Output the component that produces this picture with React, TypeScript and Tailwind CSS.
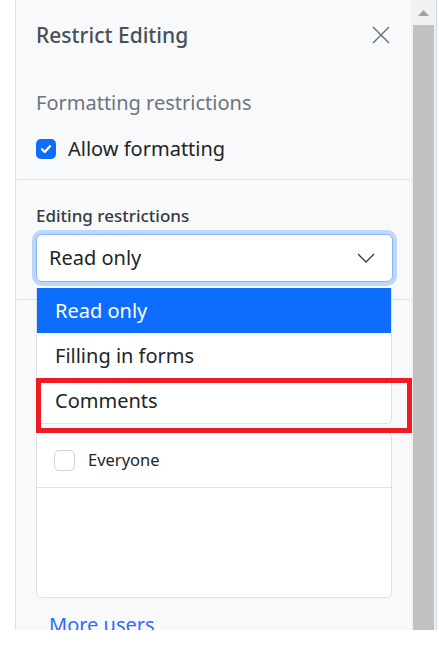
export default function App() {
  return (
    <div className="relative flex h-[630px] w-[439px] overflow-hidden bg-white font-['Noto_Sans',sans-serif]">
      <div className="w-[15px] shrink-0" />

      {/* panel */}
      <div className="flex w-[396px] shrink-0 flex-col border-l border-[#dee2e6] bg-[#f8f9fa]">
        <div className="flex items-center justify-between px-5 pt-[21px]">
          <div className="text-[21px] leading-[28px] font-medium text-[#495057]">Restrict Editing</div>
          <svg width="18" height="18" viewBox="0 0 18 18" className="mr-[1px]">
            <path d="M1 1L17 17M17 1L1 17" stroke="#6c757d" strokeWidth="1.5" fill="none" />
          </svg>
        </div>

        <div className="mx-[1px] border-b border-[#dee2e6] px-[19px] pb-[16px]">
          <div className="mt-[40px] text-[20px] leading-[28px] text-[#6c757d]">Formatting restrictions</div>
          <div className="mt-[18px] flex h-[28px] items-center gap-[12px]">
            <div className="flex h-[20px] w-[20px] items-center justify-center rounded-[5px] bg-[#0d6efd]">
              <svg width="14" height="14" viewBox="0 0 14 14">
                <path d="M3 7.2L5.8 10L11 4.2" stroke="#fff" strokeWidth="2.2" fill="none" strokeLinecap="round" strokeLinejoin="round" />
              </svg>
            </div>
            <span className="text-[20px] leading-[28px] text-[#212529]">Allow formatting</span>
          </div>
        </div>

        <div className="mx-[1px] border-b border-[#dee2e6] px-[19px] pt-[24px] pb-[17px]">
          <div className="text-[17px] leading-[24px] font-medium text-[#343a40]">Editing restrictions</div>
          <div className="relative mt-[6px] w-[357px]">
            <div className="flex h-[48px] items-center justify-between rounded-[6px] border border-[#86b7fe] bg-white pr-[17px] pl-[12px] shadow-[0_0_0_4px_rgba(13,110,253,0.25)]">
              <span className="text-[20px] text-[#212529]">Read only</span>
              <svg width="18" height="10" viewBox="0 0 18 10">
                <path d="M1 1L9 9L17 1" stroke="#343a40" strokeWidth="1.3" fill="none" />
              </svg>
            </div>

            {/* open dropdown */}
            <div className="absolute top-[54px] left-0 z-10 w-[356px] overflow-hidden rounded-b-[5px] border border-t-0 border-[#dee2e6] bg-white">
              <div className="flex h-[45px] items-center bg-[#0d6efd] pl-[18px] text-[20px] text-white">Read only</div>
              <div className="flex h-[45px] items-center pl-[18px] text-[20px] text-[#212529]">Filling in forms</div>
              <div className="flex h-[45px] items-center pl-[18px] text-[20px] text-[#212529]">Comments</div>
            </div>
          </div>
        </div>

        <div className="px-5">
          <div className="mt-[132px] w-[356px] rounded-[5px] border border-[#dee2e6] bg-white">
            <div className="flex h-[55px] items-center gap-[13px] border-b border-[#dee2e6] pl-[17px]">
              <div className="h-[21px] w-[21px] rounded-[5px] border border-[#ced4da] bg-white" />
              <span className="text-[16.5px] text-[#212529]">Everyone</span>
            </div>
            <div className="h-[109px]" />
          </div>
          <div className="mt-[13px] pl-[13px] text-[20px] leading-[28px] text-[#2f6bff]">More users</div>
        </div>
      </div>

      {/* scrollbar */}
      <div className="flex w-[25px] shrink-0 flex-col bg-[#f1f1f1] px-[2px]">
        <div className="flex h-[25px] items-start justify-center pt-[10px]">
          <svg width="11" height="6" viewBox="0 0 11 6">
            <path d="M5.5 0L11 6H0Z" fill="#a3a3a3" />
          </svg>
        </div>
        <div className="flex-1 bg-[#c1c1c1]" />
      </div>
      <div className="w-[1px] shrink-0 bg-[#cfd9e6]" />
      <div className="flex-1 bg-white" />

      {/* annotation */}
      <div className="absolute top-[378px] left-[36px] z-20 h-[55px] w-[376px] border-[5px] border-[#ed1c24]" />
    </div>
  );
}
